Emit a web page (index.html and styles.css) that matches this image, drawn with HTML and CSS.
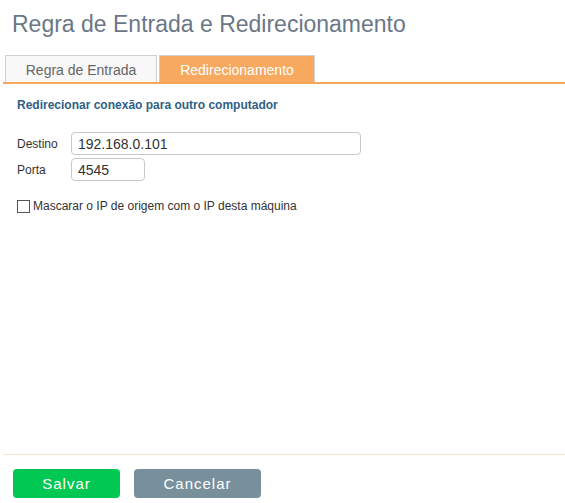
FILE: index.html
```html
<!DOCTYPE html>
<html lang="pt">
<head>
  <meta charset="UTF-8">
  <title>Regra de Entrada e Redirecionamento</title>
  <link rel="stylesheet" href="styles.css">
</head>
<body>

  <div class="dialog">
    <h1 class="title">Regra de Entrada e Redirecionamento</h1>

    <!-- Tabs -->
    <div class="tabs">
      <div class="tab">Regra de Entrada</div>
      <div class="tab active">Redirecionamento</div>
    </div>

    <div class="panel">
      <h2 class="section-title">Redirecionar conexão para outro computador</h2>

      <div class="field">
        <label for="destino">Destino</label>
        <input id="destino" class="input-wide" type="text" value="192.168.0.101">
      </div>
      <div class="field">
        <label for="porta">Porta</label>
        <input id="porta" class="input-short" type="text" value="4545">
      </div>

      <label class="check">
        <span class="box"></span>
        Mascarar o IP de origem com o IP desta máquina
      </label>
    </div>

    <div class="footer">
      <button class="btn btn-save">Salvar</button>
      <button class="btn btn-cancel">Cancelar</button>
    </div>
  </div>

</body>
</html>
```

FILE: styles.css
```css
body {
  margin: 0;
  font-family: 'Liberation Sans', Arial, sans-serif;
  background: white;
}

.dialog {
  height: 503px;
  display: flex;
  flex-direction: column;
}

.title {
  margin: 10px 0 0 12px;
  font-size: 23px;
  font-weight: normal;
  color: #6b7786;
  line-height: 28px;
}

.tabs {
  display: flex;
  gap: 2px;
  margin: 17px 0 0 3px;
  padding-left: 2px;
  border-bottom: 2px solid #f5a65b;
}

.tab {
  width: 150px;
  height: 26px;
  line-height: 28px;
  text-align: center;
  font-size: 14px;
  color: #666;
  background: #f8f8f8;
  border: 1px solid #cfcfcf;
  border-bottom: none;
}

.tab.active {
  width: 154px;
  background: #f7a95f;
  color: white;
}

.panel {
  flex: 1;
  padding: 0 14px;
}

.section-title {
  margin: 14px 0 20px 3px;
  font-size: 12px;
  font-weight: bold;
  color: #2f5f85;
}

.field {
  display: flex;
  align-items: center;
  margin-bottom: 3px;
}

.field label {
  width: 54px;
  padding-left: 3px;
  font-size: 12px;
  color: #333;
}

.field input {
  box-sizing: border-box;
  height: 23px;
  padding: 0 6px;
  font-family: inherit;
  font-size: 14px;
  color: #333;
  border: 1px solid #c8c8c8;
  border-radius: 4px;
}

.input-wide {
  width: 290px;
}

.input-short {
  width: 74px;
}

.check {
  display: flex;
  align-items: center;
  margin-top: 18px;
  padding-left: 3px;
  font-size: 12px;
  color: #333;
}

.box {
  width: 11px;
  height: 11px;
  margin-right: 3px;
  border: 1px solid #555;
}

.footer {
  margin-left: 3px;
  padding: 14px 10px 5px;
  border-top: 1px solid #fbe1ca;
  display: flex;
  gap: 14px;
}

.btn {
  height: 29px;
  border: none;
  border-radius: 4px;
  color: white;
  font-family: inherit;
  font-size: 15px;
  letter-spacing: 1px;
  cursor: pointer;
}

.btn-save {
  width: 107px;
  background: #00c853;
}

.btn-cancel {
  width: 127px;
  background: #78909c;
}
```
